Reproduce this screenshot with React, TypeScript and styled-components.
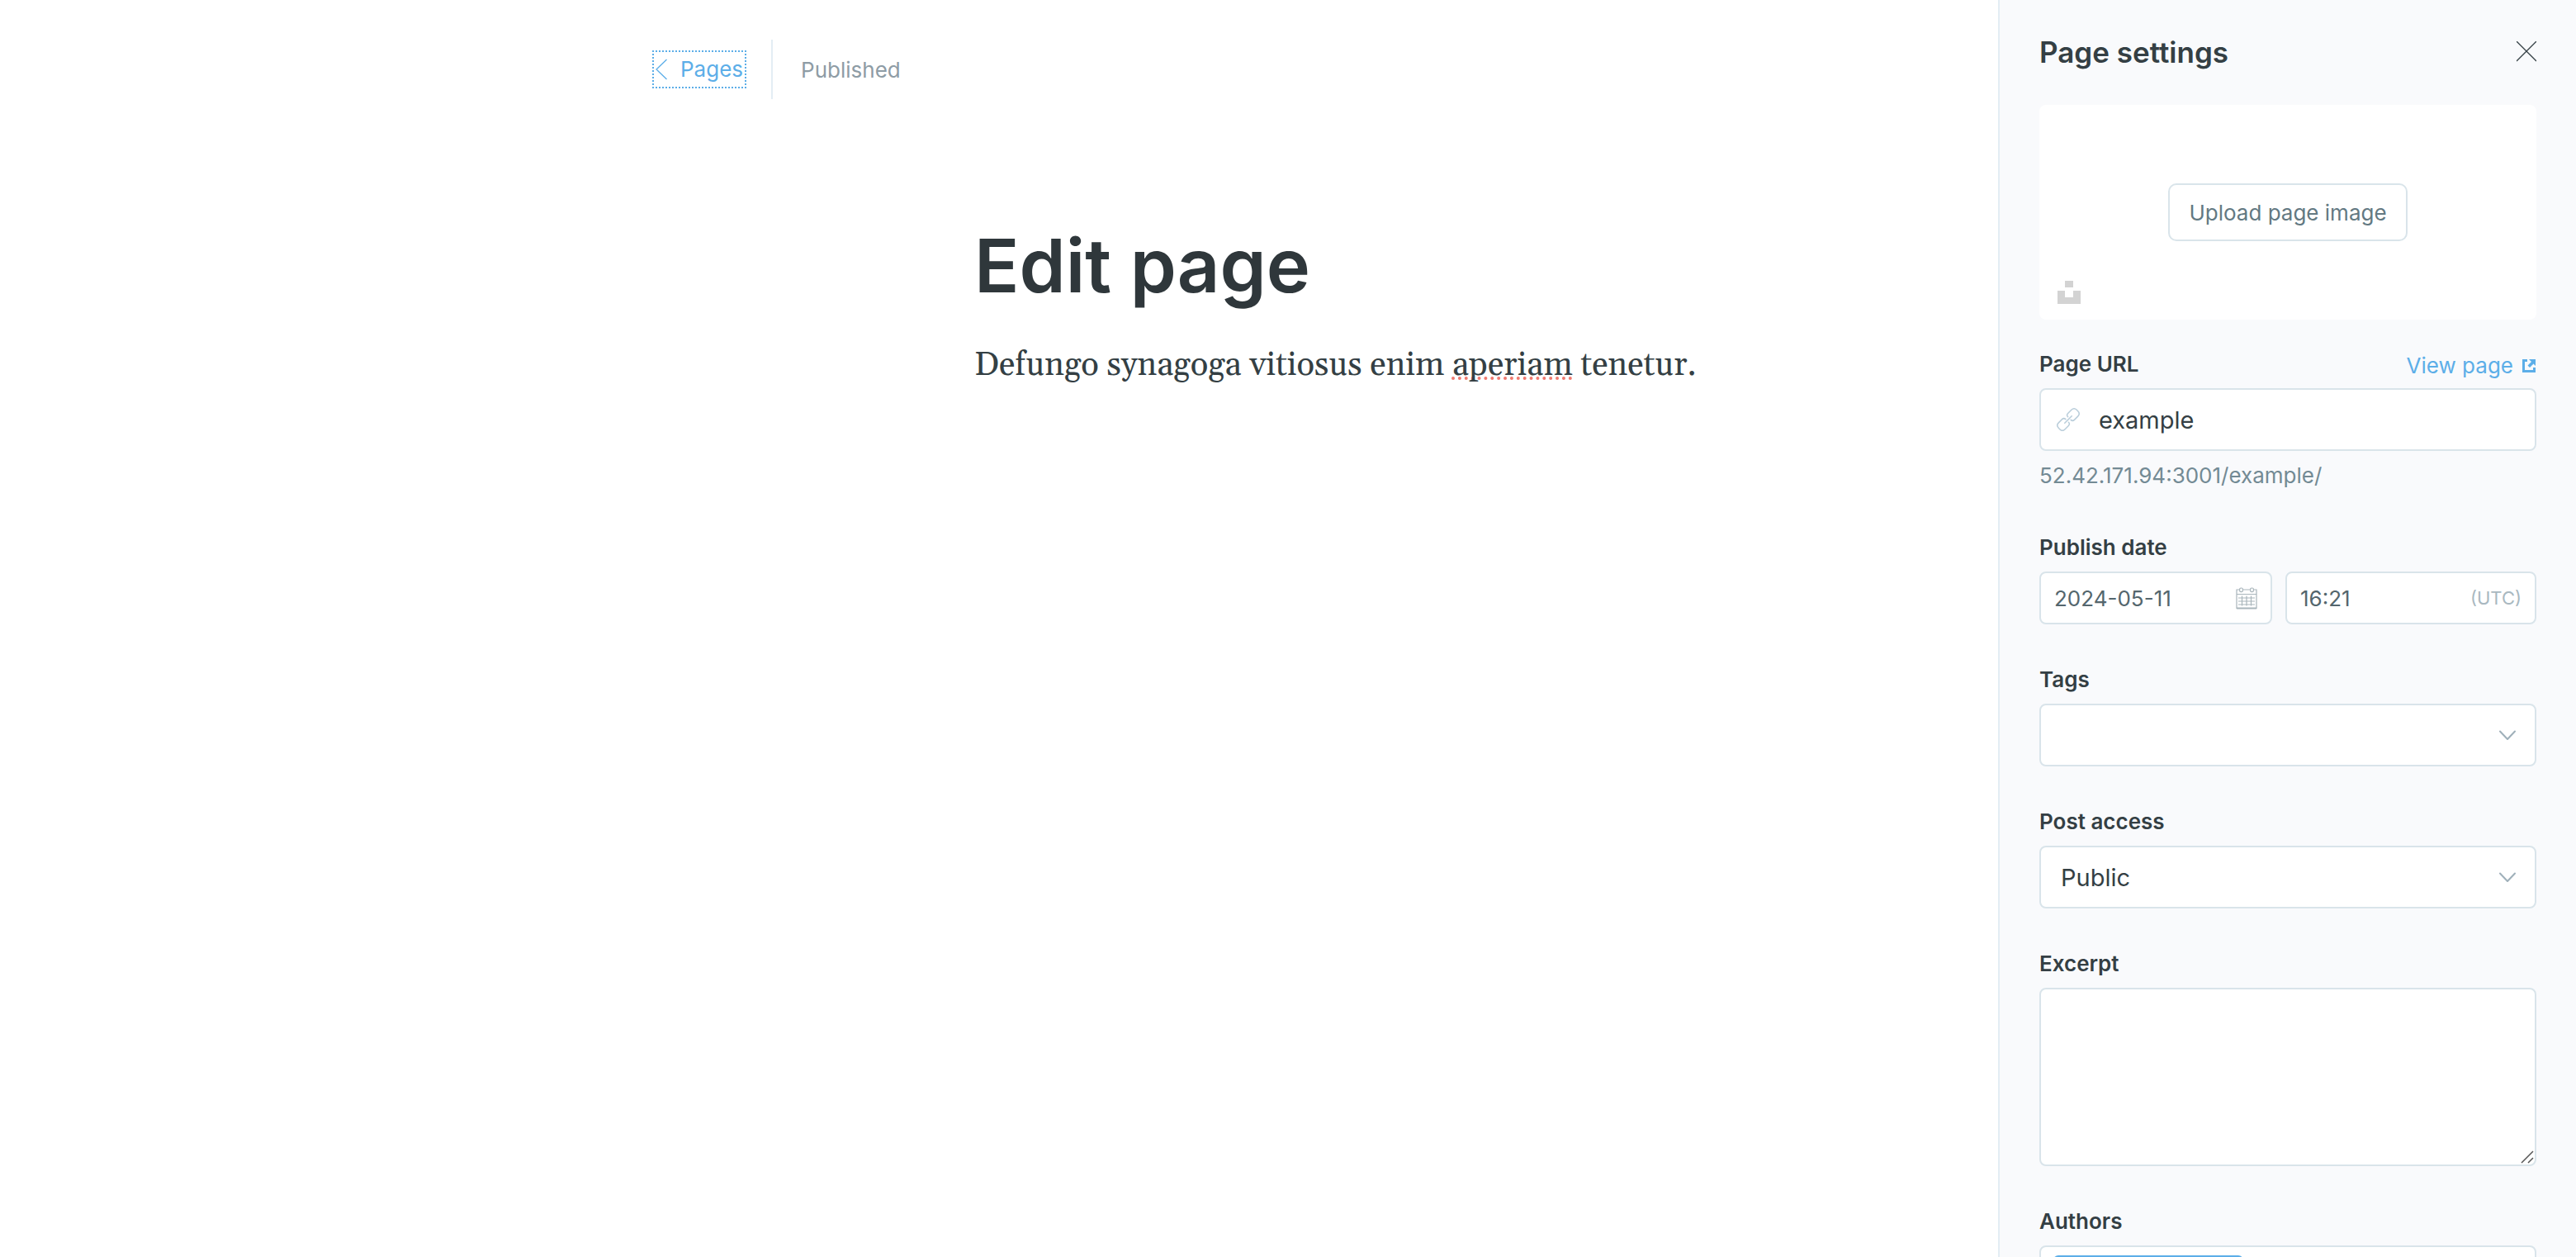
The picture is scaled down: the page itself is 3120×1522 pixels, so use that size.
import React from "react";
import styled, { createGlobalStyle } from "styled-components";

const color = {
  ink: "#343f44",
  title: "#2f373b",
  slate: "#54666d",
  button: "#637982",
  muted: "#738a94",
  faint: "#8e9ca5",
  pale: "#a9b8c0",
  blue: "#5caee8",
  line: "#d9e4ea",
  divider: "#e3edf4",
  panel: "#f9fafc",
};

const GlobalStyle = createGlobalStyle`
  *, *::before, *::after { box-sizing: border-box; }
  body {
    margin: 0;
    background: #fff;
    color: ${color.ink};
    font-family: Inter, "Liberation Sans", sans-serif;
    font-size: 26px;
  }
  button, input, select, textarea { font: inherit; color: inherit; margin: 0; }
`;

const Layout = styled.div`
  display: flex;
  height: 100vh;
  overflow: hidden;
`;

const Editor = styled.main`
  flex: 1;
  min-width: 0;
`;

const Toolbar = styled.header`
  display: flex;
  align-items: center;
  height: 72px;
  margin-top: 48px;
  padding-left: calc(50% - 420px);
`;

const BackLink = styled.a`
  display: flex;
  align-items: center;
  gap: 16px;
  height: 46px;
  padding: 0 2px;
  border: 2px dotted ${color.blue};
  color: ${color.blue};
  line-height: 42px;
  text-decoration: none;
`;

const Status = styled.span`
  display: flex;
  align-items: center;
  height: 72px;
  margin-left: 30px;
  padding-left: 34px;
  border-left: 2px solid ${color.divider};
  color: ${color.faint};
`;

const Document = styled.article`
  padding: 144px 0 0 calc(50% - 30px);
`;

const Title = styled.h1`
  margin: 0;
  color: ${color.title};
  font-size: 90px;
  font-weight: 600;
  line-height: 116px;
`;

const Paragraph = styled.p`
  margin: 30px 0 0;
  font-family: Georgia, Gelasio, "Liberation Serif", serif;
  font-size: 40px;
  line-height: 66px;
`;

const Misspelt = styled.span`
  text-decoration: underline dotted #f0796f;
  text-decoration-thickness: 4px;
  text-decoration-skip-ink: none;
  text-underline-offset: 2px;
`;

const Sidebar = styled.aside`
  flex: 0 0 700px;
  padding: 39px 48px 0;
  border-left: 2px solid ${color.divider};
  background: ${color.panel};
  overflow: hidden;
`;

const SidebarHeader = styled.div`
  display: flex;
  align-items: center;
  justify-content: space-between;
  margin-bottom: 40px;
`;

const SidebarTitle = styled.h2`
  margin: 0;
  font-size: 35px;
  font-weight: 600;
  line-height: 48px;
`;

const IconButton = styled.button`
  display: flex;
  padding: 0;
  border: 0;
  background: none;
  color: ${color.ink};
`;

const ImagePicker = styled.div`
  position: relative;
  display: flex;
  align-items: center;
  justify-content: center;
  height: 260px;
  border-radius: 8px;
  background: #fff;
`;

const UploadButton = styled.button`
  height: 70px;
  padding: 0 23px;
  border: 2px solid ${color.line};
  border-radius: 10px;
  background: #fff;
  color: ${color.button};
`;

const UnsplashButton = styled(IconButton)`
  position: absolute;
  left: 22px;
  bottom: 19px;
  color: #d3d3d3;
`;

const Group = styled.div<{ $gap?: number }>`
  margin-top: ${(p) => p.$gap ?? 50}px;
`;

const LabelRow = styled.div`
  display: flex;
  align-items: center;
  justify-content: space-between;
  height: 34px;
  margin-bottom: 12px;
`;

const Label = styled.label`
  font-weight: 600;
  line-height: 34px;
`;

const ViewLink = styled.a`
  display: flex;
  align-items: center;
  gap: 10px;
  padding-top: 4px;
  color: ${color.blue};
  line-height: 34px;
  text-decoration: none;
`;

const Field = styled.div<{ $height?: number; $pad?: number }>`
  display: flex;
  align-items: center;
  min-width: 0;
  height: ${(p) => p.$height ?? 76}px;
  padding: 0 ${(p) => p.$pad ?? 20}px;
  border: 2px solid ${color.line};
  border-radius: 8px;
  background: #fff;

  svg { flex: none; overflow: visible; }
`;

const TextInput = styled.input<{ $large?: boolean }>`
  flex: 1;
  width: 0;
  min-width: 0;
  padding: 0;
  border: 0;
  outline: 0;
  background: none;
  color: ${(p) => (p.$large ? color.ink : color.slate)};
  font-size: ${(p) => (p.$large ? 29 : 26)}px;
`;

const UrlInput = styled(TextInput)`
  margin-left: 24px;
`;

const Hint = styled.p`
  margin: 10px 0 0;
  color: ${color.muted};
  line-height: 40px;
`;

const DateRow = styled.div`
  display: grid;
  grid-template-columns: 282fr 304fr;
  gap: 16px;
`;

const Zone = styled.span`
  color: ${color.pale};
  font-size: 22px;
`;

const SelectWrap = styled.div`
  position: relative;
`;

const Select = styled.select`
  display: block;
  width: 100%;
  height: 76px;
  padding: 0 24px;
  border: 2px solid ${color.line};
  border-radius: 8px;
  background: #fff;
  font-size: 29px;
  appearance: none;
`;

const Chevron = styled.svg`
  position: absolute;
  top: 32px;
  right: 25px;
  pointer-events: none;
`;

const ExcerptWrap = styled.div`
  position: relative;
`;

const Excerpt = styled.textarea`
  display: block;
  width: 100%;
  height: 216px;
  padding: 16px 24px;
  border: 2px solid ${color.line};
  border-radius: 8px;
  background: #fff;
  resize: none;
`;

const Grip = styled.svg`
  position: absolute;
  right: 3px;
  bottom: 3px;
`;

const Authors = styled(Field)`
  align-items: flex-start;
  padding: 10px 15px;
`;

const Token = styled.span`
  width: 230px;
  height: 48px;
  border-radius: 6px;
  background: ${color.blue};
`;

function SelectField({ id, options }: { id: string; options: string[] }) {
  return (
    <SelectWrap>
      <Select id={id}>
        {options.map((o) => (
          <option key={o}>{o}</option>
        ))}
      </Select>
      <Chevron width="20" height="13" viewBox="0 0 20 13" fill="none" stroke="#9fb0ba" strokeWidth="2" strokeLinecap="round" strokeLinejoin="round">
        <path d="M1 1.5l9 9.5 9-9.5" />
      </Chevron>
    </SelectWrap>
  );
}

const LinkIcon = () => (
  <svg width="26" height="26" viewBox="0 0 26 26" fill="none" stroke="#b9cdda" strokeWidth="1.5" strokeLinecap="round" strokeLinejoin="round">
    <g transform="translate(13 13) rotate(-45)">
      <path d="M-6 0H6" />
      <path d="M2 -2.500Q2 -5.500 5 -5.500H11Q15.500 -5.500 15.500 -1V1Q15.500 5.500 11 5.500H5Q2 5.500 2 2.500" />
      <path d="M-2 -2.500Q-2 -5.500 -5 -5.500H-11Q-15.500 -5.500 -15.500 -1V1Q-15.500 5.500 -11 5.500H-5Q-2 5.500 -2 2.500" />
    </g>
  </svg>
);

const CalendarIcon = () => (
  <svg width="26" height="27" viewBox="0 0 26 27" fill="none" stroke="#a9b5bb" strokeWidth="1.2">
    <path d="M4.500 3H1v22.500h24V3h-3.500M8.500 3h9M1 8.500h24M3 13h20M3 17h20M3 21h20M7.500 10.500v12M13 10.500v12M18.500 10.500v12" />
    <rect x="4.600" y="1" width="3.800" height="4.600" rx="1.600" />
    <rect x="17.600" y="1" width="3.800" height="4.600" rx="1.600" />
    <path d="M1 25.500h24" strokeWidth="2" />
  </svg>
);

export default function App() {
  return (
    <Layout>
      <GlobalStyle />
      <Editor>
        <Toolbar>
          <BackLink href="#pages">
            <svg width="14" height="26" viewBox="0 0 14 26" fill="none" stroke="currentColor" strokeWidth="1.3">
              <path d="M13.500 1L1 13l12.500 12" />
            </svg>
            Pages
          </BackLink>
          <Status>Published</Status>
        </Toolbar>
        <Document>
          <Title>Edit page</Title>
          <Paragraph>
            Defungo synagoga vitiosus enim <Misspelt>aperiam</Misspelt> tenetur.
          </Paragraph>
        </Document>
      </Editor>

      <Sidebar>
        <SidebarHeader>
          <SidebarTitle>Page settings</SidebarTitle>
          <IconButton type="button" aria-label="Close">
            <svg width="24" height="26" viewBox="0 0 24 26" fill="none" stroke="currentColor" strokeWidth="1.3">
              <path d="M0 0l24 24M24 0L0 24" />
            </svg>
          </IconButton>
        </SidebarHeader>

        <ImagePicker>
          <UploadButton type="button">Upload page image</UploadButton>
          <UnsplashButton type="button" aria-label="Unsplash">
            <svg width="28" height="28" viewBox="0 0 28 28" fill="currentColor">
              <path d="M9 0h10v8H9zM0 12h9v8h10v-8h9v16H0z" />
            </svg>
          </UnsplashButton>
        </ImagePicker>

        <Group $gap={37}>
          <LabelRow>
            <Label htmlFor="url">Page URL</Label>
            <ViewLink href="#view">
              View page
              <svg width="18" height="18" viewBox="0 0 18 18" fill="currentColor">
                <path d="M1 1h6v3H4v10h10v-3h3v6H1z" />
                <path d="M9 1h8v8l-2.500-2.500-4.500 4.500-2.500-2.500 4.500-4.500z" />
              </svg>
            </ViewLink>
          </LabelRow>
          <Field>
            <LinkIcon />
            <UrlInput id="url" $large defaultValue="example" />
          </Field>
          <Hint>52.42.171.94:3001/example/</Hint>
        </Group>

        <Group>
          <LabelRow>
            <Label htmlFor="date">Publish date</Label>
          </LabelRow>
          <DateRow>
            <Field $height={64} $pad={16}>
              <TextInput id="date" defaultValue="2024-05-11" />
              <CalendarIcon />
            </Field>
            <Field $height={64} $pad={16}>
              <TextInput aria-label="Publish time" defaultValue="16:21" />
              <Zone>(UTC)</Zone>
            </Field>
          </DateRow>
        </Group>

        <Group>
          <LabelRow>
            <Label htmlFor="tags">Tags</Label>
          </LabelRow>
          <SelectField id="tags" options={[""]} />
        </Group>

        <Group>
          <LabelRow>
            <Label htmlFor="access">Post access</Label>
          </LabelRow>
          <SelectField id="access" options={["Public"]} />
        </Group>

        <Group>
          <LabelRow>
            <Label htmlFor="excerpt">Excerpt</Label>
          </LabelRow>
          <ExcerptWrap>
            <Excerpt id="excerpt" />
            <Grip width="16" height="16" viewBox="0 0 16 16" fill="none" stroke="#555" strokeWidth="1.500">
              <path d="M1 15L15 1M9 15l6-6" />
            </Grip>
          </ExcerptWrap>
        </Group>

        <Group>
          <LabelRow>
            <Label htmlFor="authors">Authors</Label>
          </LabelRow>
          <Authors>
            <Token />
            <TextInput id="authors" $large />
          </Authors>
        </Group>
      </Sidebar>
    </Layout>
  );
}
